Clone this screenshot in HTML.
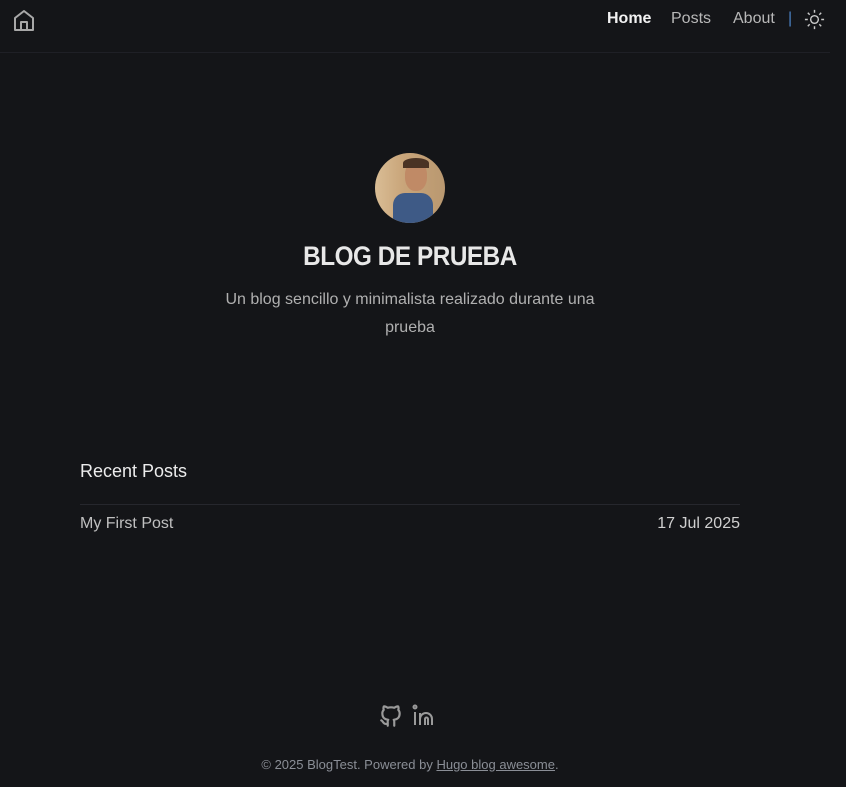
<!DOCTYPE html>
<html><head><meta charset="utf-8"><style>
html,body{margin:0;padding:0;background:#141518;width:846px;height:787px;overflow:hidden;font-family:"Liberation Sans",Roboto,sans-serif;}
.hdr{position:absolute;left:0;top:0;width:830px;height:52px;border-bottom:1px solid #1f2026;}
.nav{position:absolute;top:10px;font-size:16px;color:#b8b8b8;}
.av{position:absolute;left:375px;top:153px;width:70px;height:70px;border-radius:50%;overflow:hidden;background:linear-gradient(90deg,#d9bd95 0%,#c9a57a 40%,#b99870 100%);}
h1{position:absolute;top:241px;left:0;width:820px;text-align:center;margin:0;font-size:27px;color:#e8e8e8;font-weight:bold;letter-spacing:-0.5px;transform:scaleX(0.9);}
.sub{position:absolute;top:286px;left:220px;width:380px;text-align:center;font-size:16px;line-height:28px;color:#b0b0b0;}
</style></head><body>
<div class="hdr">
<svg style="position:absolute;left:12px;top:9px" width="24" height="24" viewBox="0 0 24 24" fill="none" stroke="#a8a8a8" stroke-width="2" stroke-linejoin="round"><path d="M3 21V9l9-7 9 7v12z"/><path d="M9 21v-8h6v8"/></svg>
<span class="nav" style="left:607px;color:#f2f2f2;font-weight:bold">Home</span>
<span class="nav" style="left:671px">Posts</span>
<span class="nav" style="left:733px">About</span>
<span class="nav" style="left:788px;color:#4a7fc0">|</span>
<svg style="position:absolute;left:803px;top:8px" width="23" height="23" viewBox="0 0 24 24" fill="none" stroke="#c8c8c8" stroke-width="1.5"><circle cx="12" cy="12" r="4"/><path d="M12 2v3M12 19v3M2 12h3M19 12h3M5 5l2 2M17 17l2 2M5 19l2-2M17 7l2-2"/></svg>
</div>
<div class="av">
<div style="position:absolute;left:18px;top:40px;width:40px;height:35px;background:#3e5a86;border-radius:12px 12px 0 0"></div>
<div style="position:absolute;left:30px;top:8px;width:22px;height:30px;background:#c08a66;border-radius:45%"></div>
<div style="position:absolute;left:28px;top:5px;width:26px;height:10px;background:#4a3324;border-radius:50% 50% 0 0"></div>
</div>
<h1>BLOG DE PRUEBA</h1>
<div class="sub">Un blog sencillo y minimalista realizado durante una prueba</div>
<div style="position:absolute;left:80px;top:461px;font-size:18px;color:#ececec">Recent Posts</div>
<div style="position:absolute;left:80px;top:504px;width:660px;border-top:1px solid #26272d"></div>
<div style="position:absolute;left:80px;top:515px;font-size:16px;color:#c0c0c0">My First Post</div>
<div style="position:absolute;right:106px;top:515px;font-size:16px;color:#d0d0d0">17 Jul 2025</div>
<svg style="position:absolute;left:378px;top:702px" width="26" height="28" viewBox="0 0 24 24" fill="none" stroke="#9a9a9a" stroke-width="2" stroke-linecap="round" stroke-linejoin="round"><path d="M9 19c-4.3 1.4-4.3-2.5-6-3m12 5v-3.5c0-1 .1-1.4-.5-2 2.8-.3 5.5-1.4 5.5-6a4.6 4.6 0 0 0-1.3-3.2 4.2 4.2 0 0 0-.1-3.2s-1.1-.3-3.5 1.3a12.3 12.3 0 0 0-6.2 0C6.5 2.8 5.4 3.1 5.4 3.1a4.2 4.2 0 0 0-.1 3.2A4.6 4.6 0 0 0 4 9.5c0 4.6 2.7 5.7 5.5 6-.6.6-.6 1.2-.5 2V21"/></svg>
<svg style="position:absolute;left:412px;top:704px" width="25" height="24" viewBox="0 0 25 24" fill="none" stroke="#9a9a9a" stroke-width="2"><circle cx="3" cy="3" r="1.5"/><path d="M3 8v13M8 21V9M8 15a6 6 0 0 1 12 0v6M13 21v-6a1.5 1.5 0 0 1 3 0v6"/></svg>
<div style="position:absolute;left:0;width:820px;top:757px;text-align:center;font-size:13px;color:#8a8e96">© 2025 BlogTest. Powered by <span style="text-decoration:underline">Hugo blog awesome</span>.</div>
</body></html>
